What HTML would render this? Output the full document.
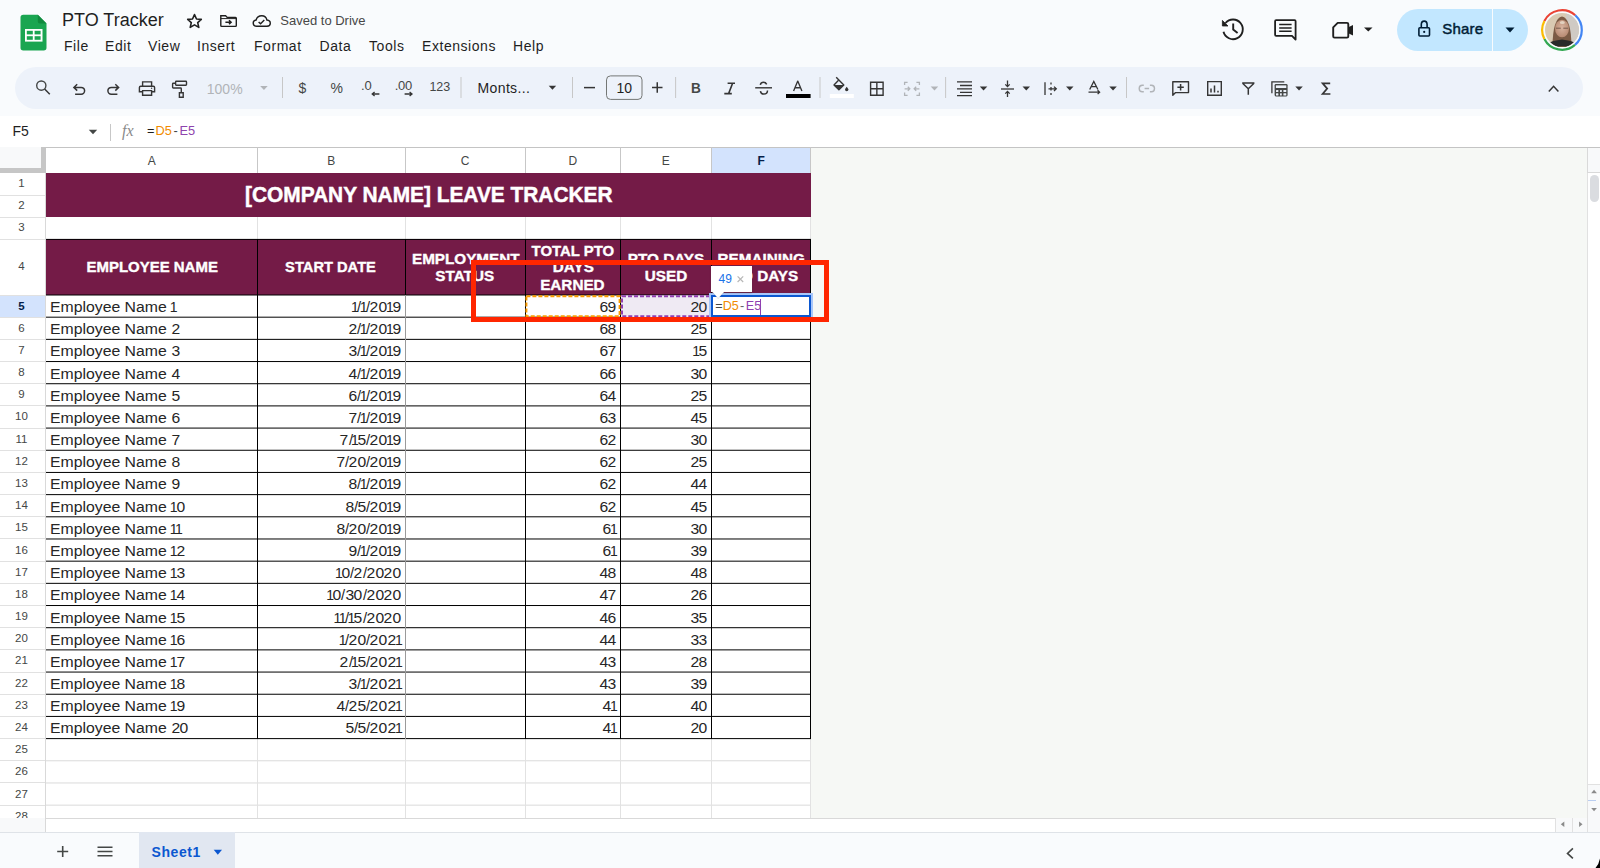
<!DOCTYPE html><html><head><meta charset='utf-8'><title>PTO Tracker</title><style>
*{box-sizing:border-box;margin:0;padding:0}
html,body{width:1600px;height:868px;overflow:hidden;background:#f9fbfd;font-family:"Liberation Sans",sans-serif;color:#1f1f1f}
.abs{position:absolute}
.t{position:absolute;white-space:nowrap;line-height:1}
.ic{position:absolute;overflow:visible}
.hl{position:absolute;height:1px}
.vl{position:absolute;width:1px}
.g{display:inline-flex;justify-content:center;overflow:visible}
</style></head><body>
<svg class='ic' style='left:20px;top:14px' width='28' height='37' viewBox='0 0 28 37'>
<path d='M2.5 0.8 H17.8 L26.5 9.5 V33.8 Q26.5 36.5 23.8 36.5 H3.2 Q0.5 36.5 0.5 33.8 V3.5 Q0.5 0.8 3.2 0.8Z' fill='#1aa551'/>
<path d='M17.8 0.8 L26.5 9.5 H20 Q17.8 9.5 17.8 7.3Z' fill='#108a3e'/>
<rect x='5' y='15' width='17.5' height='12.6' fill='#fff'/>
<rect x='6.8' y='16.8' width='6' height='3.6' fill='#1aa551'/><rect x='14.6' y='16.8' width='6' height='3.6' fill='#1aa551'/>
<rect x='6.8' y='22.2' width='6' height='3.6' fill='#1aa551'/><rect x='14.6' y='22.2' width='6' height='3.6' fill='#1aa551'/>
</svg>
<div class='t' style='left:62px;top:11px;font-size:18px;color:#1f1f1f'>PTO Tracker</div>
<svg class='ic' style='left:185px;top:12px' width='19' height='18' viewBox='0 0 19 18'><path d='M9.5 2.6 L11.5 7 L16.3 7.4 L12.7 10.6 L13.8 15.4 L9.5 12.9 L5.2 15.4 L6.3 10.6 L2.7 7.4 L7.5 7Z' fill='none' stroke='#1f1f1f' stroke-width='1.6' stroke-linejoin='round'/></svg>
<svg class='ic' style='left:0;top:0' width='400' height='40' viewBox='0 0 400 40'><path d='M220.8 15.8 H225.6 L227.2 17.4 H235.5 Q236.3 17.4 236.3 18.2 V25.6 Q236.3 26.4 235.5 26.4 H221.6 Q220.8 26.4 220.8 25.6Z' fill='none' stroke='#1f1f1f' stroke-width='1.4'/><path d='M220.8 18.6 H236.3' stroke='#1f1f1f' stroke-width='1'/><path d='M225.4 22.2 H231 M229 20.3 L231.1 22.2 L229 24.1' fill='none' stroke='#1f1f1f' stroke-width='1.5'/></svg>
<svg class='ic' style='left:0;top:0' width='400' height='40' viewBox='0 0 400 40'><path d='M256.6 26.2 Q253.2 26.2 253.2 23.1 Q253.2 20.4 256.1 20 Q257.2 15.7 261.8 15.7 Q266 15.7 266.9 20 Q270.3 20.3 270.3 23.2 Q270.3 26.2 267 26.2Z' fill='none' stroke='#1f1f1f' stroke-width='1.4'/><path d='M258.6 21.9 L260.6 23.8 L264.3 20.1' fill='none' stroke='#1f1f1f' stroke-width='1.4'/></svg>
<div class='t' style='left:280.3px;top:14px;font-size:13px;color:#474747'>Saved to Drive</div>
<div class='t' style='left:64px;top:39px;font-size:14px;color:#1f1f1f;letter-spacing:0.55px'>File</div>
<div class='t' style='left:105px;top:39px;font-size:14px;color:#1f1f1f;letter-spacing:0.55px'>Edit</div>
<div class='t' style='left:148px;top:39px;font-size:14px;color:#1f1f1f;letter-spacing:0.55px'>View</div>
<div class='t' style='left:197px;top:39px;font-size:14px;color:#1f1f1f;letter-spacing:0.55px'>Insert</div>
<div class='t' style='left:254px;top:39px;font-size:14px;color:#1f1f1f;letter-spacing:0.55px'>Format</div>
<div class='t' style='left:319.5px;top:39px;font-size:14px;color:#1f1f1f;letter-spacing:0.55px'>Data</div>
<div class='t' style='left:369px;top:39px;font-size:14px;color:#1f1f1f;letter-spacing:0.55px'>Tools</div>
<div class='t' style='left:422px;top:39px;font-size:14px;color:#1f1f1f;letter-spacing:0.55px'>Extensions</div>
<div class='t' style='left:513px;top:39px;font-size:14px;color:#1f1f1f;letter-spacing:0.55px'>Help</div>
<svg class='ic' style='left:0;top:0' width='1600' height='60' viewBox='0 0 1600 60'>
<path d='M1223.5 31.8 A9.8 9.8 0 1 0 1225.5 23' fill='none' stroke='#1f1f1f' stroke-width='1.9'/>
<path d='M1222.4 20.4 L1222.4 26 L1228 26Z' fill='#1f1f1f' stroke='#1f1f1f' stroke-width='0.8' stroke-linejoin='round'/>
<path d='M1233.2 23.6 V29.6 L1237.6 33.1' fill='none' stroke='#1f1f1f' stroke-width='1.9'/>
<path d='M1276.1 20.2 H1294.6 Q1295.6 20.2 1295.6 21.2 V39.6 L1292 35.8 H1276.1 Q1275.1 35.8 1275.1 34.8 V21.2 Q1275.1 20.2 1276.1 20.2Z' fill='none' stroke='#1f1f1f' stroke-width='1.8' stroke-linejoin='round'/>
<path d='M1279.2 24.6 H1291.6 M1279.2 28 H1291.6 M1279.2 31.3 H1291.6' stroke='#1f1f1f' stroke-width='1.5'/>
<path d='M1337.7 22.9 H1347 Q1348.3 22.9 1348.3 24.2 V36.3 Q1348.3 37.6 1347 37.6 H1334.5 Q1333.2 37.6 1333.2 36.3 V27.4Z' fill='none' stroke='#1f1f1f' stroke-width='1.9' stroke-linejoin='round'/>
<path d='M1348.3 27.2 L1353 24.9 V35.5 L1348.3 33.2Z' fill='#1f1f1f'/>
<path d='M1364 27.4 H1372.5 L1368.25 31.6Z' fill='#1f1f1f'/>
</svg>
<div class='abs' style='left:1397px;top:9px;width:131px;height:41.5px;border-radius:21px;background:#c2e7ff'></div>
<div class='abs' style='left:1492px;top:9px;width:1px;height:41.5px;background:#f9fbfd'></div>
<svg class='ic' style='left:0;top:0' width='1600' height='60' viewBox='0 0 1600 60'><rect x='1418.9' y='27.8' width='10.6' height='8.2' rx='0.9' fill='none' stroke='#001d35' stroke-width='1.6'/><path d='M1421.3 27.8 V24.6 Q1421.3 21.1 1424.2 21.1 Q1427.1 21.1 1427.1 24.6 V27.8' fill='none' stroke='#001d35' stroke-width='1.6'/><circle cx='1424.2' cy='31.9' r='1.1' fill='#001d35'/></svg>
<div class='t' style='left:1442.3px;top:20.9px;font-size:15px;color:#001d35;-webkit-text-stroke:0.45px #001d35;letter-spacing:0.2px'>Share</div>
<svg class='ic' style='left:1504px;top:26px' width='12' height='8' viewBox='0 0 12 8'><path d='M1.5 1.5 H10.5 L6 6.5Z' fill='#001d35'/></svg>
<svg class='ic' style='left:1540px;top:7.8px' width='44' height='44' viewBox='0 0 44 44'>
<defs><clipPath id='avc'><circle cx='22' cy='22' r='17'/></clipPath>
<radialGradient id='face' cx='0.5' cy='0.45' r='0.55'><stop offset='0' stop-color='#d8b4a0'/><stop offset='1' stop-color='#b88a72'/></radialGradient></defs>
<path d='M4.36 13.01 A19.8 19.8 0 0 1 35.25 7.29' fill='none' stroke='#ea4335' stroke-width='2.2'/><path d='M35.25 7.29 A19.8 19.8 0 0 1 34.99 36.94' fill='none' stroke='#4285f4' stroke-width='2.2'/><path d='M34.99 36.94 A19.8 19.8 0 0 1 4.36 30.99' fill='none' stroke='#34a853' stroke-width='2.2'/><path d='M4.36 30.99 A19.8 19.8 0 0 1 4.36 13.01' fill='none' stroke='#fbbc04' stroke-width='2.2'/>
<g clip-path='url(#avc)'>
<rect x='0' y='0' width='44' height='44' fill='#d9c9b2'/>
<rect x='26' y='0' width='18' height='44' fill='#cfcac4'/>
<path d='M12.5 44 Q12 10 22 8.5 Q32 10 31.5 44Z' fill='#7b5a44'/>
<ellipse cx='22' cy='20.5' rx='7' ry='8.8' fill='url(#face)'/>
<ellipse cx='22.3' cy='14.5' rx='2.5' ry='1.5' fill='#e3d2c0'/>
<path d='M4 44 Q6 33.5 16 32.5 L22 31.5 L28 32.5 Q38 33.5 40 44Z' fill='#2a2a2a'/>
<path d='M18 38 Q20 44 22 44 Q24 44 26 38' fill='#7b5a44' opacity='0.8'/>
<path d='M15.8 20.2 H20.8 M23.3 20.2 H28.3' stroke='#6e5446' stroke-width='0.9'/>
</g></svg>
<div class='abs' style='left:15px;top:66.5px;width:1568px;height:42px;border-radius:21px;background:#edf2fa'></div>
<div class='abs' style='left:0;top:116px;width:1600px;height:31px;background:#fff'></div>
<div class='t' style='left:12.5px;top:123.5px;font-size:14px;color:#1f1f1f'>F5</div>
<svg class='ic' style='left:88px;top:129px' width='10' height='6' viewBox='0 0 10 6'><path d='M0.8 0.8 H9.2 L5 5.2Z' fill='#444746'/></svg>
<div class='abs' style='left:110px;top:124px;width:1px;height:17px;background:#c7c7c7'></div>
<div class='t' style='left:122px;top:123px;font-size:16px;font-family:"Liberation Serif",serif;font-style:italic;color:#8a8a8a'>fx</div>
<div class='t' style='left:147px;top:125.3px;font-size:12.8px;color:#1f1f1f'>=<span style='color:#f28b00;margin-left:1px'>D5</span><span style='margin:0 1.8px 0 1.6px;color:#444'>-</span><span style='color:#8e44ad'>E5</span></div>
<svg class='abs' style='left:0;top:0;pointer-events:none' width='1600' height='868' viewBox='0 0 1600 868'><circle cx='41.3' cy='85.6' r='4.6' fill='none' stroke='#444746' stroke-width='1.4'/><path d='M44.6 89 L49.8 94.2' fill='none' stroke='#353535' stroke-width='1.5' /><path d='M77.2 84.3 L73.9 87.4 L77.2 90.6 M74 87.4 H81.2 A3.4 3.4 0 0 1 81.2 94.2 H75.1' fill='none' stroke='#353535' stroke-width='1.5' /><path d='M115.3 84.3 L118.6 87.4 L115.3 90.6 M118.5 87.4 H111.3 A3.4 3.4 0 0 0 111.3 94.2 H117.4' fill='none' stroke='#353535' stroke-width='1.5' /><path d='M142.6 86.2 V81.9 H151.6 V86.2 M142.6 91.8 H139.4 V87.6 Q139.4 86.3 140.7 86.3 H153.3 Q154.6 86.3 154.6 87.6 V91.8 H151.6' fill='none' stroke='#353535' stroke-width='1.4' /><path d='M142.6 90.6 H151.6 V95.3 H142.6Z' fill='none' stroke='#353535' stroke-width='1.4' /><circle cx='151.6' cy='88.3' r='0.7' fill='#444746'/><path d='M176.3 81.3 H185.8 Q186.5 81.3 186.5 82 V84.6 Q186.5 85.3 185.8 85.3 H176.3 Q175.6 85.3 175.6 84.6 V82 Q175.6 81.3 176.3 81.3Z' fill='none' stroke='#353535' stroke-width='1.4' /><path d='M175.6 83.2 H173.3 Q172.6 83.2 172.6 83.9 V87.3 Q172.6 88 173.3 88 H180.6 Q181.3 88 181.3 88.7 V92.6' fill='none' stroke='#353535' stroke-width='1.4' /><path d='M179.4 92.7 H183.2 V97.2 H179.4Z' fill='none' stroke='#353535' stroke-width='1.4' /><path d='M260.2 85.9 h7.5 l-3.75 4z' fill='#b1b4b8'/><rect x='282.0' y='77' width='1' height='21' fill='#c7c7c7'/><path d='M379.4 94 H372.5 M374.6 92 L372.2 94 L374.6 96' fill='none' stroke='#353535' stroke-width='1.3' /><path d='M404.6 94 H411.8 M409.6 92 L412 94 L409.6 96' fill='none' stroke='#353535' stroke-width='1.3' /><rect x='460.5' y='77' width='1' height='21' fill='#c7c7c7'/><path d='M548.7 85.8 h7.5 l-3.75 4z' fill='#353535'/><rect x='572.0' y='77' width='1' height='21' fill='#c7c7c7'/><path d='M584 87.6 H595' fill='none' stroke='#353535' stroke-width='1.5' /><rect x='606.5' y='75.9' width='35.5' height='23.5' rx='4' fill='none' stroke='#747775' stroke-width='1'/><path d='M652 87.6 H662.5 M657.25 82.3 V92.8' fill='none' stroke='#353535' stroke-width='1.5' /><rect x='675.1' y='77' width='1' height='21' fill='#c7c7c7'/><path d='M727.6 83.3 H735 M724.3 93.6 H731.8 M732.6 83.3 L728.6 93.6' fill='none' stroke='#353535' stroke-width='1.6' /><path d='M755.2 87.8 H772' fill='none' stroke='#353535' stroke-width='1.4' /><path d='M760.3 84.9 Q760.9 82.3 763.5 82.3 Q765.7 82.3 766.7 84.3' fill='none' stroke='#353535' stroke-width='1.5' /><path d='M760.4 91.1 Q760.9 94.1 763.8 94.1 Q767.4 94.1 767.5 90.5' fill='none' stroke='#353535' stroke-width='1.5' /><path d='M793.6 90.9 L797.75 81.1 L801.9 90.9 M794.9 87.7 H800.6' fill='none' stroke='#353535' stroke-width='1.35' stroke-linejoin='round'/><path d='M786 94 H810.6 V98 H786Z' fill='#000'/><path d='M829.8 94 H853.8 V98 H829.8Z' fill='#fff'/><rect x='819.5' y='77' width='1' height='21' fill='#c7c7c7'/><path d='M836.2 77.2 L843.8 84.9 L838.9 89.8 L834 84.9 L838.3 80.6' fill='none' stroke='#353535' stroke-width='1.4' stroke-linejoin='round'/><path d='M834 84.9 H843.8 L838.9 89.8Z' fill='#353535'/><path d='M846.7 86.8 Q848.4 88.8 848.4 89.6 A1.7 1.7 0 0 1 845 89.6 Q845 88.8 846.7 86.8Z' fill='#353535'/><path d='M870.6 82.3 H883.1 V95.3 H870.6Z M876.85 82.3 V95.3 M870.6 88.8 H883.1' fill='none' stroke='#353535' stroke-width='1.4' /><path d='M904.6 85 V82.3 H907.6 M904.6 92.5 V95.3 H907.6 M919.4 85 V82.3 H916.4 M919.4 92.5 V95.3 H916.4' fill='none' stroke='#b1b4b8' stroke-width='1.3' /><path d='M904.6 88.8 H909.8 M907.8 86.8 L909.8 88.8 L907.8 90.8 M919.4 88.8 H914.2 M916.2 86.8 L914.2 88.8 L916.2 90.8' fill='none' stroke='#b1b4b8' stroke-width='1.3' /><path d='M930.7 86.6 h7.5 l-3.75 4z' fill='#b1b4b8'/><rect x='945.1' y='77' width='1' height='21' fill='#c7c7c7'/><path d='M957 81.9 H972 M960 85.5 H972 M957 88.9 H972 M960 92.3 H972 M957 95.6 H972' fill='none' stroke='#353535' stroke-width='1.3' /><path d='M979.8 86.6 h7.5 l-3.75 4z' fill='#353535'/><path d='M1001 89 H1014' fill='none' stroke='#353535' stroke-width='1.3' /><path d='M1007.5 80.4 V86.4 M1005.3 84.4 L1007.5 86.6 L1009.7 84.4 M1007.5 97 V91.6 M1005.3 93.6 L1007.5 91.4 L1009.7 93.6' fill='none' stroke='#353535' stroke-width='1.3' /><path d='M1022.5 86.6 h7.5 l-3.75 4z' fill='#353535'/><path d='M1045 82.2 V95 M1051 82.5 V84.5 M1051 87 V90.5 M1051 93 V95 M1048.5 88.8 H1056.2 M1054 86.6 L1056.3 88.8 L1054 91' fill='none' stroke='#353535' stroke-width='1.3' /><path d='M1066 86.6 h7.5 l-3.75 4z' fill='#353535'/><path d='M1088.5 92.2 H1099.5 M1097.6 90.3 L1099.6 92.2 L1097.6 94.1' fill='none' stroke='#353535' stroke-width='1.3' /><path d='M1089.7 89.5 L1093.8 81.4 L1097.9 89.5 M1091.2 86.6 H1096.4' fill='none' stroke='#353535' stroke-width='1.3' /><path d='M1109.3 86.6 h7.5 l-3.75 4z' fill='#353535'/><rect x='1126.0' y='77' width='1' height='21' fill='#c7c7c7'/><path d='M1143.8 85.3 H1142.3 Q1139.2 85.3 1139.2 88.5 Q1139.2 91.7 1142.3 91.7 H1143.8 M1149.9 85.3 H1151.4 Q1154.5 85.3 1154.5 88.5 Q1154.5 91.7 1151.4 91.7 H1149.9 M1144.6 88.5 H1149.1' fill='none' stroke='#b1b4b8' stroke-width='1.4' /><path d='M1172.8 95.3 V81.8 H1188.5 V92.6 H1175.6Z' fill='none' stroke='#353535' stroke-width='1.4' stroke-linejoin='round'/><path d='M1180.6 83.9 V90.4 M1177.4 87.2 H1183.8' fill='none' stroke='#353535' stroke-width='1.5' /><path d='M1207.7 81.6 H1221.3 V95.3 H1207.7Z' fill='none' stroke='#353535' stroke-width='1.4' /><path d='M1211 88.6 V92.6 M1214.5 85.4 V92.6 M1218 90.8 V92.6' fill='none' stroke='#353535' stroke-width='1.5' /><path d='M1242.2 82.9 H1254.4 M1242.6 83.2 L1248.3 88.8 L1254 83.2 M1248.3 88.6 V94.8' fill='none' stroke='#353535' stroke-width='1.5' /><path d='M1271.9 93.3 V81.9 H1284.3' fill='none' stroke='#353535' stroke-width='1.3' /><rect x='1274.6' y='84' width='13' height='12.4' rx='1.3' fill='#444746'/><rect x='1275.9' y='85.4' width='10.4' height='2.6' fill='#edf2fa'/><rect x='1276' y='89.9' width='2.4' height='2.0' rx='0.5' fill='#edf2fa'/><rect x='1276' y='93.25' width='2.4' height='2.2' rx='0.5' fill='#edf2fa'/><rect x='1280' y='89.9' width='1.8' height='2.0' rx='0.5' fill='#edf2fa'/><rect x='1280' y='93.25' width='1.8' height='2.2' rx='0.5' fill='#edf2fa'/><rect x='1283.4' y='89.9' width='2.9' height='2.0' rx='0.5' fill='#edf2fa'/><rect x='1283.4' y='93.25' width='2.9' height='2.2' rx='0.5' fill='#edf2fa'/><path d='M1295.3 86.6 h7.5 l-3.75 4z' fill='#353535'/><path d='M1330.2 83.3 H1322.6 L1327.2 88.6 L1322.6 94 H1330.4' fill='none' stroke='#353535' stroke-width='1.7' stroke-linejoin='miter'/><path d='M1548.8 91.5 L1553.6 86.3 L1558.4 91.5' fill='none' stroke='#353535' stroke-width='1.5' /></svg>
<div class='t' style='left:206.8px;top:81.5px;font-size:14px;color:#b1b4b8'>100%</div>
<div class='t' style='left:298.6px;top:80.8px;font-size:14px;color:#444746'>$</div>
<div class='t' style='left:330.6px;top:80.8px;font-size:14px;color:#444746'>%</div>
<div class='t' style='left:361px;top:79px;font-size:13px;color:#444746'>.0</div>
<div class='t' style='left:394.7px;top:79px;font-size:13px;color:#444746;letter-spacing:-0.3px'>.00</div>
<div class='t' style='left:429.4px;top:81px;font-size:12.5px;color:#444746'>123</div>
<div class='t' style='left:477.6px;top:80.5px;font-size:14px;color:#1f1f1f;letter-spacing:0.35px'>Monts...</div>
<div class='t' style='left:616.5px;top:80.8px;font-size:14px;color:#1f1f1f'>10</div>
<div class='t' style='left:690.9px;top:80.2px;font-size:15.5px;font-weight:700;color:#444746;transform:scaleX(0.88);transform-origin:0 0'>B</div>
<div class='abs' style='left:0;top:147px;width:1588px;height:671px;background:#f6f8f5'></div>
<div class='abs' style='left:46px;top:147px;width:765px;height:671px;background:#fff'></div>
<div class='abs' style='left:0;top:146.6px;width:1600px;height:1px;background:#c4c4c4'></div>
<div class='abs' style='left:0;top:147px;width:41.5px;height:21.3px;background:#f8f9fa'></div>
<div class='abs' style='left:41.2px;top:147px;width:4.8px;height:25.8px;background:#c6c6c6'></div>
<div class='abs' style='left:0;top:168.3px;width:46px;height:4.5px;background:#c6c6c6'></div>
<div class='abs' style='left:711.5px;top:147.5px;width:99.5px;height:25px;background:#d3e3fd'></div>
<div class='abs' style='left:0;top:172.8px;width:45.5px;height:645px;background:#fff'></div>
<div class='abs' style='left:0;top:295.5px;width:45.5px;height:22px;background:#d3e3fd'></div>
<div class='t' style='left:131.75px;width:40px;text-align:center;top:154.5px;font-size:12px;color:#444746'>A</div>
<div class='t' style='left:311.25px;width:40px;text-align:center;top:154.5px;font-size:12px;color:#444746'>B</div>
<div class='t' style='left:445.2px;width:40px;text-align:center;top:154.5px;font-size:12px;color:#444746'>C</div>
<div class='t' style='left:552.9px;width:40px;text-align:center;top:154.5px;font-size:12px;color:#444746'>D</div>
<div class='t' style='left:645.825px;width:40px;text-align:center;top:154.5px;font-size:12px;color:#444746'>E</div>
<div class='t' style='left:741.075px;width:40px;text-align:center;top:154.5px;font-size:12px;font-weight:700;color:#041e49'>F</div>
<div class='t' style='left:-1px;width:45px;text-align:center;top:177.60px;font-size:11.5px;color:#444746'>1</div>
<div class='t' style='left:-1px;width:45px;text-align:center;top:199.80px;font-size:11.5px;color:#444746'>2</div>
<div class='t' style='left:-1px;width:45px;text-align:center;top:222.00px;font-size:11.5px;color:#444746'>3</div>
<div class='t' style='left:-1px;width:45px;text-align:center;top:260.90px;font-size:11.5px;color:#444746'>4</div>
<div class='t' style='left:-1px;width:45px;text-align:center;top:300.59px;font-size:11.5px;font-weight:700;color:#041e49'>5</div>
<div class='t' style='left:-1px;width:45px;text-align:center;top:322.77px;font-size:11.5px;color:#444746'>6</div>
<div class='t' style='left:-1px;width:45px;text-align:center;top:344.95px;font-size:11.5px;color:#444746'>7</div>
<div class='t' style='left:-1px;width:45px;text-align:center;top:367.13px;font-size:11.5px;color:#444746'>8</div>
<div class='t' style='left:-1px;width:45px;text-align:center;top:389.31px;font-size:11.5px;color:#444746'>9</div>
<div class='t' style='left:-1px;width:45px;text-align:center;top:411.49px;font-size:11.5px;color:#444746'>10</div>
<div class='t' style='left:-1px;width:45px;text-align:center;top:433.67px;font-size:11.5px;color:#444746'>11</div>
<div class='t' style='left:-1px;width:45px;text-align:center;top:455.85px;font-size:11.5px;color:#444746'>12</div>
<div class='t' style='left:-1px;width:45px;text-align:center;top:478.03px;font-size:11.5px;color:#444746'>13</div>
<div class='t' style='left:-1px;width:45px;text-align:center;top:500.21px;font-size:11.5px;color:#444746'>14</div>
<div class='t' style='left:-1px;width:45px;text-align:center;top:522.39px;font-size:11.5px;color:#444746'>15</div>
<div class='t' style='left:-1px;width:45px;text-align:center;top:544.57px;font-size:11.5px;color:#444746'>16</div>
<div class='t' style='left:-1px;width:45px;text-align:center;top:566.75px;font-size:11.5px;color:#444746'>17</div>
<div class='t' style='left:-1px;width:45px;text-align:center;top:588.93px;font-size:11.5px;color:#444746'>18</div>
<div class='t' style='left:-1px;width:45px;text-align:center;top:611.11px;font-size:11.5px;color:#444746'>19</div>
<div class='t' style='left:-1px;width:45px;text-align:center;top:633.29px;font-size:11.5px;color:#444746'>20</div>
<div class='t' style='left:-1px;width:45px;text-align:center;top:655.47px;font-size:11.5px;color:#444746'>21</div>
<div class='t' style='left:-1px;width:45px;text-align:center;top:677.65px;font-size:11.5px;color:#444746'>22</div>
<div class='t' style='left:-1px;width:45px;text-align:center;top:699.83px;font-size:11.5px;color:#444746'>23</div>
<div class='t' style='left:-1px;width:45px;text-align:center;top:722.01px;font-size:11.5px;color:#444746'>24</div>
<div class='t' style='left:-1px;width:45px;text-align:center;top:744.19px;font-size:11.5px;color:#444746'>25</div>
<div class='t' style='left:-1px;width:45px;text-align:center;top:766.37px;font-size:11.5px;color:#444746'>26</div>
<div class='t' style='left:-1px;width:45px;text-align:center;top:788.55px;font-size:11.5px;color:#444746'>27</div>
<div class='t' style='left:-1px;width:45px;text-align:center;top:810.73px;font-size:11.5px;color:#444746'>28</div>
<div class='hl' style='left:0;top:194.50px;width:46px;background:#e1e1e1'></div>
<div class='hl' style='left:0;top:216.70px;width:46px;background:#e1e1e1'></div>
<div class='hl' style='left:0;top:238.90px;width:46px;background:#e1e1e1'></div>
<div class='hl' style='left:0;top:294.50px;width:46px;background:#e1e1e1'></div>
<div class='hl' style='left:0;top:316.68px;width:46px;background:#e1e1e1'></div>
<div class='hl' style='left:0;top:338.86px;width:46px;background:#e1e1e1'></div>
<div class='hl' style='left:0;top:361.04px;width:46px;background:#e1e1e1'></div>
<div class='hl' style='left:0;top:383.22px;width:46px;background:#e1e1e1'></div>
<div class='hl' style='left:0;top:405.40px;width:46px;background:#e1e1e1'></div>
<div class='hl' style='left:0;top:427.58px;width:46px;background:#e1e1e1'></div>
<div class='hl' style='left:0;top:449.76px;width:46px;background:#e1e1e1'></div>
<div class='hl' style='left:0;top:471.94px;width:46px;background:#e1e1e1'></div>
<div class='hl' style='left:0;top:494.12px;width:46px;background:#e1e1e1'></div>
<div class='hl' style='left:0;top:516.30px;width:46px;background:#e1e1e1'></div>
<div class='hl' style='left:0;top:538.48px;width:46px;background:#e1e1e1'></div>
<div class='hl' style='left:0;top:560.66px;width:46px;background:#e1e1e1'></div>
<div class='hl' style='left:0;top:582.84px;width:46px;background:#e1e1e1'></div>
<div class='hl' style='left:0;top:605.02px;width:46px;background:#e1e1e1'></div>
<div class='hl' style='left:0;top:627.20px;width:46px;background:#e1e1e1'></div>
<div class='hl' style='left:0;top:649.38px;width:46px;background:#e1e1e1'></div>
<div class='hl' style='left:0;top:671.56px;width:46px;background:#e1e1e1'></div>
<div class='hl' style='left:0;top:693.74px;width:46px;background:#e1e1e1'></div>
<div class='hl' style='left:0;top:715.92px;width:46px;background:#e1e1e1'></div>
<div class='hl' style='left:0;top:738.10px;width:46px;background:#e1e1e1'></div>
<div class='hl' style='left:0;top:760.28px;width:46px;background:#e1e1e1'></div>
<div class='hl' style='left:0;top:782.46px;width:46px;background:#e1e1e1'></div>
<div class='hl' style='left:0;top:804.64px;width:46px;background:#e1e1e1'></div>
<div class='vl' style='left:45.3px;top:172.8px;height:645px;background:#d9d9d9'></div>
<div class='vl' style='left:257.00px;top:147px;height:25.8px;background:#c7c7c7'></div>
<div class='vl' style='left:404.50px;top:147px;height:25.8px;background:#c7c7c7'></div>
<div class='vl' style='left:524.90px;top:147px;height:25.8px;background:#c7c7c7'></div>
<div class='vl' style='left:619.90px;top:147px;height:25.8px;background:#c7c7c7'></div>
<div class='vl' style='left:710.75px;top:147px;height:25.8px;background:#c7c7c7'></div>
<div class='vl' style='left:810.40px;top:147px;height:25.8px;background:#c7c7c7'></div>
<svg class='abs' style='left:0;top:0' width='1600' height='868' viewBox='0 0 1600 868'><rect x='46' y='760.28' width='765' height='1' fill='#dadada'/></svg>
<svg class='abs' style='left:0;top:0' width='1600' height='868' viewBox='0 0 1600 868'><rect x='46' y='782.46' width='765' height='1' fill='#dadada'/></svg>
<svg class='abs' style='left:0;top:0' width='1600' height='868' viewBox='0 0 1600 868'><rect x='46' y='804.64' width='765' height='1' fill='#dadada'/></svg>
<div class='vl' style='left:257.00px;top:738.6px;height:80px;background:#e2e2e2'></div>
<div class='vl' style='left:257.00px;top:217px;height:22.4px;background:#e2e2e2'></div>
<div class='vl' style='left:404.50px;top:738.6px;height:80px;background:#e2e2e2'></div>
<div class='vl' style='left:404.50px;top:217px;height:22.4px;background:#e2e2e2'></div>
<div class='vl' style='left:524.90px;top:738.6px;height:80px;background:#e2e2e2'></div>
<div class='vl' style='left:524.90px;top:217px;height:22.4px;background:#e2e2e2'></div>
<div class='vl' style='left:619.90px;top:738.6px;height:80px;background:#e2e2e2'></div>
<div class='vl' style='left:619.90px;top:217px;height:22.4px;background:#e2e2e2'></div>
<div class='vl' style='left:710.75px;top:738.6px;height:80px;background:#e2e2e2'></div>
<div class='vl' style='left:710.75px;top:217px;height:22.4px;background:#e2e2e2'></div>
<div class='vl' style='left:810.40px;top:738.6px;height:80px;background:#e2e2e2'></div>
<div class='vl' style='left:810.40px;top:217px;height:22.4px;background:#e2e2e2'></div>
<div class='abs' style='left:46px;top:172.8px;width:765px;height:44.4px;background:#741b47'></div>
<div class='t' style='left:245px;top:184px;font-size:21.2px;font-weight:700;color:#fff;-webkit-text-stroke:0.45px #fff;transform:scaleX(0.985);transform-origin:0 0'>[COMPANY NAME] LEAVE TRACKER</div>
<div class='abs' style='left:46px;top:239.4px;width:765px;height:55.6px;background:#741b47'></div>
<svg class='abs' style='left:0;top:0' width='1600' height='868' viewBox='0 0 1600 868'><rect x='46' y='238.90' width='765' height='1' fill='#000'/><rect x='46' y='294.50' width='765' height='1' fill='#000'/><rect x='46' y='316.68' width='765' height='1' fill='#000'/><rect x='46' y='338.86' width='765' height='1' fill='#000'/><rect x='46' y='361.04' width='765' height='1' fill='#000'/><rect x='46' y='383.22' width='765' height='1' fill='#000'/><rect x='46' y='405.40' width='765' height='1' fill='#000'/><rect x='46' y='427.58' width='765' height='1' fill='#000'/><rect x='46' y='449.76' width='765' height='1' fill='#000'/><rect x='46' y='471.94' width='765' height='1' fill='#000'/><rect x='46' y='494.12' width='765' height='1' fill='#000'/><rect x='46' y='516.30' width='765' height='1' fill='#000'/><rect x='46' y='538.48' width='765' height='1' fill='#000'/><rect x='46' y='560.66' width='765' height='1' fill='#000'/><rect x='46' y='582.84' width='765' height='1' fill='#000'/><rect x='46' y='605.02' width='765' height='1' fill='#000'/><rect x='46' y='627.20' width='765' height='1' fill='#000'/><rect x='46' y='649.38' width='765' height='1' fill='#000'/><rect x='46' y='671.56' width='765' height='1' fill='#000'/><rect x='46' y='693.74' width='765' height='1' fill='#000'/><rect x='46' y='715.92' width='765' height='1' fill='#000'/><rect x='46' y='738.10' width='765' height='1' fill='#000'/></svg>
<div class='vl' style='left:257.00px;top:239.4px;height:499.4px;background:#000'></div>
<div class='vl' style='left:404.50px;top:239.4px;height:499.4px;background:#9a9a9a'></div>
<div class='vl' style='left:524.90px;top:239.4px;height:499.4px;background:#000'></div>
<div class='vl' style='left:619.90px;top:239.4px;height:499.4px;background:#000'></div>
<div class='vl' style='left:710.75px;top:239.4px;height:499.4px;background:#000'></div>
<div class='vl' style='left:810.40px;top:239.4px;height:499.4px;background:#000'></div>
<div class='vl' style='left:404.50px;top:239.4px;height:55.6px;background:#000'></div>
<div class='t' style='left:51.70px;width:200px;text-align:center;top:260.13px;font-size:14.4px;font-weight:700;color:#fff;-webkit-text-stroke:0.35px #fff'><span style='display:inline-block;transform:scaleX(1.04)'>EMPLOYEE NAME</span></div>
<div class='t' style='left:230.85px;width:200px;text-align:center;top:260.13px;font-size:14.4px;font-weight:700;color:#fff;-webkit-text-stroke:0.35px #fff'><span style='display:inline-block;transform:scaleX(1.02)'>START DATE</span></div>
<div class='t' style='left:365.50px;width:200px;text-align:center;top:252.13px;font-size:14.4px;font-weight:700;color:#fff;-webkit-text-stroke:0.35px #fff'><span style='display:inline-block;transform:scaleX(1.06)'>EMPLOYMENT</span></div>
<div class='t' style='left:365.00px;width:200px;text-align:center;top:268.83px;font-size:14.4px;font-weight:700;color:#fff;-webkit-text-stroke:0.35px #fff'><span style='display:inline-block;transform:scaleX(1.06)'>STATUS</span></div>
<div class='t' style='left:472.95px;width:200px;text-align:center;top:243.83px;font-size:14.4px;font-weight:700;color:#fff;-webkit-text-stroke:0.35px #fff'><span style='display:inline-block;transform:scaleX(1.035)'>TOTAL PTO</span></div>
<div class='t' style='left:473.00px;width:200px;text-align:center;top:260.13px;font-size:14.4px;font-weight:700;color:#fff;-webkit-text-stroke:0.35px #fff'><span style='display:inline-block;transform:scaleX(1.06)'>DAYS</span></div>
<div class='t' style='left:472.85px;width:200px;text-align:center;top:277.53px;font-size:14.4px;font-weight:700;color:#fff;-webkit-text-stroke:0.35px #fff'><span style='display:inline-block;transform:scaleX(1.06)'>EARNED</span></div>
<div class='t' style='left:565.65px;width:200px;text-align:center;top:251.63px;font-size:14.4px;font-weight:700;color:#fff;-webkit-text-stroke:0.35px #fff'><span style='display:inline-block;transform:scaleX(1.06)'>PTO DAYS</span></div>
<div class='t' style='left:566.05px;width:200px;text-align:center;top:268.83px;font-size:14.4px;font-weight:700;color:#fff;-webkit-text-stroke:0.35px #fff'><span style='display:inline-block;transform:scaleX(1.06)'>USED</span></div>
<div class='t' style='left:661.00px;width:200px;text-align:center;top:251.63px;font-size:14.4px;font-weight:700;color:#fff;-webkit-text-stroke:0.35px #fff'><span style='display:inline-block;transform:scaleX(1.06)'>REMAINING</span></div>
<div class='t' style='left:660.00px;width:200px;text-align:center;top:268.83px;font-size:14.4px;font-weight:700;color:#fff;-webkit-text-stroke:0.35px #fff'><span style='display:inline-block;transform:scaleX(1.06)'>PTO DAYS</span></div>
<div class='t' style='left:49.9px;top:300.02px;font-size:14px;color:#262626'><span style='display:inline-block;transform:scaleX(1.128);transform-origin:0 0'>Employee Name</span></div>
<div class='t' style='left:171px;top:300.02px;font-size:14px;color:#262626;display:flex'><span class='g' style='width:5.25px'><span style='display:inline-block;transform:scaleX(1.0)'>1</span></span></div>
<div class='t' style='left:200px;width:201.4px;top:300.02px;font-size:14px;color:#262626;display:flex;justify-content:flex-end'><span class='g' style='width:5.25px'><span style='display:inline-block;transform:scaleX(1.0)'>1</span></span><span class='g' style='width:3.5px'><span style='display:inline-block;transform:scaleX(1.05)'>/</span></span><span class='g' style='width:5.25px'><span style='display:inline-block;transform:scaleX(1.0)'>1</span></span><span class='g' style='width:3.5px'><span style='display:inline-block;transform:scaleX(1.05)'>/</span></span><span class='g' style='width:8.8px'><span style='display:inline-block;transform:scaleX(1.12)'>2</span></span><span class='g' style='width:8.8px'><span style='display:inline-block;transform:scaleX(1.12)'>0</span></span><span class='g' style='width:5.25px'><span style='display:inline-block;transform:scaleX(1.0)'>1</span></span><span class='g' style='width:8.8px'><span style='display:inline-block;transform:scaleX(1.12)'>9</span></span></div>
<div class='t' style='left:49.9px;top:322.20px;font-size:14px;color:#262626'><span style='display:inline-block;transform:scaleX(1.128);transform-origin:0 0'>Employee Name</span></div>
<div class='t' style='left:171px;top:322.20px;font-size:14px;color:#262626;display:flex'><span class='g' style='width:8.8px'><span style='display:inline-block;transform:scaleX(1.12)'>2</span></span></div>
<div class='t' style='left:200px;width:201.4px;top:322.20px;font-size:14px;color:#262626;display:flex;justify-content:flex-end'><span class='g' style='width:8.8px'><span style='display:inline-block;transform:scaleX(1.12)'>2</span></span><span class='g' style='width:3.5px'><span style='display:inline-block;transform:scaleX(1.05)'>/</span></span><span class='g' style='width:5.25px'><span style='display:inline-block;transform:scaleX(1.0)'>1</span></span><span class='g' style='width:3.5px'><span style='display:inline-block;transform:scaleX(1.05)'>/</span></span><span class='g' style='width:8.8px'><span style='display:inline-block;transform:scaleX(1.12)'>2</span></span><span class='g' style='width:8.8px'><span style='display:inline-block;transform:scaleX(1.12)'>0</span></span><span class='g' style='width:5.25px'><span style='display:inline-block;transform:scaleX(1.0)'>1</span></span><span class='g' style='width:8.8px'><span style='display:inline-block;transform:scaleX(1.12)'>9</span></span></div>
<div class='t' style='left:516px;width:100.6px;top:322.20px;font-size:14px;color:#262626;display:flex;justify-content:flex-end'><span class='g' style='width:8.8px'><span style='display:inline-block;transform:scaleX(1.12)'>6</span></span><span class='g' style='width:8.8px'><span style='display:inline-block;transform:scaleX(1.12)'>8</span></span></div>
<div class='t' style='left:607px;width:100.6px;top:322.20px;font-size:14px;color:#262626;display:flex;justify-content:flex-end'><span class='g' style='width:8.8px'><span style='display:inline-block;transform:scaleX(1.12)'>2</span></span><span class='g' style='width:8.8px'><span style='display:inline-block;transform:scaleX(1.12)'>5</span></span></div>
<div class='t' style='left:49.9px;top:344.38px;font-size:14px;color:#262626'><span style='display:inline-block;transform:scaleX(1.128);transform-origin:0 0'>Employee Name</span></div>
<div class='t' style='left:171px;top:344.38px;font-size:14px;color:#262626;display:flex'><span class='g' style='width:8.8px'><span style='display:inline-block;transform:scaleX(1.12)'>3</span></span></div>
<div class='t' style='left:200px;width:201.4px;top:344.38px;font-size:14px;color:#262626;display:flex;justify-content:flex-end'><span class='g' style='width:8.8px'><span style='display:inline-block;transform:scaleX(1.12)'>3</span></span><span class='g' style='width:3.5px'><span style='display:inline-block;transform:scaleX(1.05)'>/</span></span><span class='g' style='width:5.25px'><span style='display:inline-block;transform:scaleX(1.0)'>1</span></span><span class='g' style='width:3.5px'><span style='display:inline-block;transform:scaleX(1.05)'>/</span></span><span class='g' style='width:8.8px'><span style='display:inline-block;transform:scaleX(1.12)'>2</span></span><span class='g' style='width:8.8px'><span style='display:inline-block;transform:scaleX(1.12)'>0</span></span><span class='g' style='width:5.25px'><span style='display:inline-block;transform:scaleX(1.0)'>1</span></span><span class='g' style='width:8.8px'><span style='display:inline-block;transform:scaleX(1.12)'>9</span></span></div>
<div class='t' style='left:516px;width:100.6px;top:344.38px;font-size:14px;color:#262626;display:flex;justify-content:flex-end'><span class='g' style='width:8.8px'><span style='display:inline-block;transform:scaleX(1.12)'>6</span></span><span class='g' style='width:8.8px'><span style='display:inline-block;transform:scaleX(1.12)'>7</span></span></div>
<div class='t' style='left:607px;width:100.6px;top:344.38px;font-size:14px;color:#262626;display:flex;justify-content:flex-end'><span class='g' style='width:5.25px'><span style='display:inline-block;transform:scaleX(1.0)'>1</span></span><span class='g' style='width:8.8px'><span style='display:inline-block;transform:scaleX(1.12)'>5</span></span></div>
<div class='t' style='left:49.9px;top:366.56px;font-size:14px;color:#262626'><span style='display:inline-block;transform:scaleX(1.128);transform-origin:0 0'>Employee Name</span></div>
<div class='t' style='left:171px;top:366.56px;font-size:14px;color:#262626;display:flex'><span class='g' style='width:8.8px'><span style='display:inline-block;transform:scaleX(1.12)'>4</span></span></div>
<div class='t' style='left:200px;width:201.4px;top:366.56px;font-size:14px;color:#262626;display:flex;justify-content:flex-end'><span class='g' style='width:8.8px'><span style='display:inline-block;transform:scaleX(1.12)'>4</span></span><span class='g' style='width:3.5px'><span style='display:inline-block;transform:scaleX(1.05)'>/</span></span><span class='g' style='width:5.25px'><span style='display:inline-block;transform:scaleX(1.0)'>1</span></span><span class='g' style='width:3.5px'><span style='display:inline-block;transform:scaleX(1.05)'>/</span></span><span class='g' style='width:8.8px'><span style='display:inline-block;transform:scaleX(1.12)'>2</span></span><span class='g' style='width:8.8px'><span style='display:inline-block;transform:scaleX(1.12)'>0</span></span><span class='g' style='width:5.25px'><span style='display:inline-block;transform:scaleX(1.0)'>1</span></span><span class='g' style='width:8.8px'><span style='display:inline-block;transform:scaleX(1.12)'>9</span></span></div>
<div class='t' style='left:516px;width:100.6px;top:366.56px;font-size:14px;color:#262626;display:flex;justify-content:flex-end'><span class='g' style='width:8.8px'><span style='display:inline-block;transform:scaleX(1.12)'>6</span></span><span class='g' style='width:8.8px'><span style='display:inline-block;transform:scaleX(1.12)'>6</span></span></div>
<div class='t' style='left:607px;width:100.6px;top:366.56px;font-size:14px;color:#262626;display:flex;justify-content:flex-end'><span class='g' style='width:8.8px'><span style='display:inline-block;transform:scaleX(1.12)'>3</span></span><span class='g' style='width:8.8px'><span style='display:inline-block;transform:scaleX(1.12)'>0</span></span></div>
<div class='t' style='left:49.9px;top:388.74px;font-size:14px;color:#262626'><span style='display:inline-block;transform:scaleX(1.128);transform-origin:0 0'>Employee Name</span></div>
<div class='t' style='left:171px;top:388.74px;font-size:14px;color:#262626;display:flex'><span class='g' style='width:8.8px'><span style='display:inline-block;transform:scaleX(1.12)'>5</span></span></div>
<div class='t' style='left:200px;width:201.4px;top:388.74px;font-size:14px;color:#262626;display:flex;justify-content:flex-end'><span class='g' style='width:8.8px'><span style='display:inline-block;transform:scaleX(1.12)'>6</span></span><span class='g' style='width:3.5px'><span style='display:inline-block;transform:scaleX(1.05)'>/</span></span><span class='g' style='width:5.25px'><span style='display:inline-block;transform:scaleX(1.0)'>1</span></span><span class='g' style='width:3.5px'><span style='display:inline-block;transform:scaleX(1.05)'>/</span></span><span class='g' style='width:8.8px'><span style='display:inline-block;transform:scaleX(1.12)'>2</span></span><span class='g' style='width:8.8px'><span style='display:inline-block;transform:scaleX(1.12)'>0</span></span><span class='g' style='width:5.25px'><span style='display:inline-block;transform:scaleX(1.0)'>1</span></span><span class='g' style='width:8.8px'><span style='display:inline-block;transform:scaleX(1.12)'>9</span></span></div>
<div class='t' style='left:516px;width:100.6px;top:388.74px;font-size:14px;color:#262626;display:flex;justify-content:flex-end'><span class='g' style='width:8.8px'><span style='display:inline-block;transform:scaleX(1.12)'>6</span></span><span class='g' style='width:8.8px'><span style='display:inline-block;transform:scaleX(1.12)'>4</span></span></div>
<div class='t' style='left:607px;width:100.6px;top:388.74px;font-size:14px;color:#262626;display:flex;justify-content:flex-end'><span class='g' style='width:8.8px'><span style='display:inline-block;transform:scaleX(1.12)'>2</span></span><span class='g' style='width:8.8px'><span style='display:inline-block;transform:scaleX(1.12)'>5</span></span></div>
<div class='t' style='left:49.9px;top:410.92px;font-size:14px;color:#262626'><span style='display:inline-block;transform:scaleX(1.128);transform-origin:0 0'>Employee Name</span></div>
<div class='t' style='left:171px;top:410.92px;font-size:14px;color:#262626;display:flex'><span class='g' style='width:8.8px'><span style='display:inline-block;transform:scaleX(1.12)'>6</span></span></div>
<div class='t' style='left:200px;width:201.4px;top:410.92px;font-size:14px;color:#262626;display:flex;justify-content:flex-end'><span class='g' style='width:8.8px'><span style='display:inline-block;transform:scaleX(1.12)'>7</span></span><span class='g' style='width:3.5px'><span style='display:inline-block;transform:scaleX(1.05)'>/</span></span><span class='g' style='width:5.25px'><span style='display:inline-block;transform:scaleX(1.0)'>1</span></span><span class='g' style='width:3.5px'><span style='display:inline-block;transform:scaleX(1.05)'>/</span></span><span class='g' style='width:8.8px'><span style='display:inline-block;transform:scaleX(1.12)'>2</span></span><span class='g' style='width:8.8px'><span style='display:inline-block;transform:scaleX(1.12)'>0</span></span><span class='g' style='width:5.25px'><span style='display:inline-block;transform:scaleX(1.0)'>1</span></span><span class='g' style='width:8.8px'><span style='display:inline-block;transform:scaleX(1.12)'>9</span></span></div>
<div class='t' style='left:516px;width:100.6px;top:410.92px;font-size:14px;color:#262626;display:flex;justify-content:flex-end'><span class='g' style='width:8.8px'><span style='display:inline-block;transform:scaleX(1.12)'>6</span></span><span class='g' style='width:8.8px'><span style='display:inline-block;transform:scaleX(1.12)'>3</span></span></div>
<div class='t' style='left:607px;width:100.6px;top:410.92px;font-size:14px;color:#262626;display:flex;justify-content:flex-end'><span class='g' style='width:8.8px'><span style='display:inline-block;transform:scaleX(1.12)'>4</span></span><span class='g' style='width:8.8px'><span style='display:inline-block;transform:scaleX(1.12)'>5</span></span></div>
<div class='t' style='left:49.9px;top:433.10px;font-size:14px;color:#262626'><span style='display:inline-block;transform:scaleX(1.128);transform-origin:0 0'>Employee Name</span></div>
<div class='t' style='left:171px;top:433.10px;font-size:14px;color:#262626;display:flex'><span class='g' style='width:8.8px'><span style='display:inline-block;transform:scaleX(1.12)'>7</span></span></div>
<div class='t' style='left:200px;width:201.4px;top:433.10px;font-size:14px;color:#262626;display:flex;justify-content:flex-end'><span class='g' style='width:8.8px'><span style='display:inline-block;transform:scaleX(1.12)'>7</span></span><span class='g' style='width:3.5px'><span style='display:inline-block;transform:scaleX(1.05)'>/</span></span><span class='g' style='width:5.25px'><span style='display:inline-block;transform:scaleX(1.0)'>1</span></span><span class='g' style='width:8.8px'><span style='display:inline-block;transform:scaleX(1.12)'>5</span></span><span class='g' style='width:3.5px'><span style='display:inline-block;transform:scaleX(1.05)'>/</span></span><span class='g' style='width:8.8px'><span style='display:inline-block;transform:scaleX(1.12)'>2</span></span><span class='g' style='width:8.8px'><span style='display:inline-block;transform:scaleX(1.12)'>0</span></span><span class='g' style='width:5.25px'><span style='display:inline-block;transform:scaleX(1.0)'>1</span></span><span class='g' style='width:8.8px'><span style='display:inline-block;transform:scaleX(1.12)'>9</span></span></div>
<div class='t' style='left:516px;width:100.6px;top:433.10px;font-size:14px;color:#262626;display:flex;justify-content:flex-end'><span class='g' style='width:8.8px'><span style='display:inline-block;transform:scaleX(1.12)'>6</span></span><span class='g' style='width:8.8px'><span style='display:inline-block;transform:scaleX(1.12)'>2</span></span></div>
<div class='t' style='left:607px;width:100.6px;top:433.10px;font-size:14px;color:#262626;display:flex;justify-content:flex-end'><span class='g' style='width:8.8px'><span style='display:inline-block;transform:scaleX(1.12)'>3</span></span><span class='g' style='width:8.8px'><span style='display:inline-block;transform:scaleX(1.12)'>0</span></span></div>
<div class='t' style='left:49.9px;top:455.28px;font-size:14px;color:#262626'><span style='display:inline-block;transform:scaleX(1.128);transform-origin:0 0'>Employee Name</span></div>
<div class='t' style='left:171px;top:455.28px;font-size:14px;color:#262626;display:flex'><span class='g' style='width:8.8px'><span style='display:inline-block;transform:scaleX(1.12)'>8</span></span></div>
<div class='t' style='left:200px;width:201.4px;top:455.28px;font-size:14px;color:#262626;display:flex;justify-content:flex-end'><span class='g' style='width:8.8px'><span style='display:inline-block;transform:scaleX(1.12)'>7</span></span><span class='g' style='width:3.5px'><span style='display:inline-block;transform:scaleX(1.05)'>/</span></span><span class='g' style='width:8.8px'><span style='display:inline-block;transform:scaleX(1.12)'>2</span></span><span class='g' style='width:8.8px'><span style='display:inline-block;transform:scaleX(1.12)'>0</span></span><span class='g' style='width:3.5px'><span style='display:inline-block;transform:scaleX(1.05)'>/</span></span><span class='g' style='width:8.8px'><span style='display:inline-block;transform:scaleX(1.12)'>2</span></span><span class='g' style='width:8.8px'><span style='display:inline-block;transform:scaleX(1.12)'>0</span></span><span class='g' style='width:5.25px'><span style='display:inline-block;transform:scaleX(1.0)'>1</span></span><span class='g' style='width:8.8px'><span style='display:inline-block;transform:scaleX(1.12)'>9</span></span></div>
<div class='t' style='left:516px;width:100.6px;top:455.28px;font-size:14px;color:#262626;display:flex;justify-content:flex-end'><span class='g' style='width:8.8px'><span style='display:inline-block;transform:scaleX(1.12)'>6</span></span><span class='g' style='width:8.8px'><span style='display:inline-block;transform:scaleX(1.12)'>2</span></span></div>
<div class='t' style='left:607px;width:100.6px;top:455.28px;font-size:14px;color:#262626;display:flex;justify-content:flex-end'><span class='g' style='width:8.8px'><span style='display:inline-block;transform:scaleX(1.12)'>2</span></span><span class='g' style='width:8.8px'><span style='display:inline-block;transform:scaleX(1.12)'>5</span></span></div>
<div class='t' style='left:49.9px;top:477.46px;font-size:14px;color:#262626'><span style='display:inline-block;transform:scaleX(1.128);transform-origin:0 0'>Employee Name</span></div>
<div class='t' style='left:171px;top:477.46px;font-size:14px;color:#262626;display:flex'><span class='g' style='width:8.8px'><span style='display:inline-block;transform:scaleX(1.12)'>9</span></span></div>
<div class='t' style='left:200px;width:201.4px;top:477.46px;font-size:14px;color:#262626;display:flex;justify-content:flex-end'><span class='g' style='width:8.8px'><span style='display:inline-block;transform:scaleX(1.12)'>8</span></span><span class='g' style='width:3.5px'><span style='display:inline-block;transform:scaleX(1.05)'>/</span></span><span class='g' style='width:5.25px'><span style='display:inline-block;transform:scaleX(1.0)'>1</span></span><span class='g' style='width:3.5px'><span style='display:inline-block;transform:scaleX(1.05)'>/</span></span><span class='g' style='width:8.8px'><span style='display:inline-block;transform:scaleX(1.12)'>2</span></span><span class='g' style='width:8.8px'><span style='display:inline-block;transform:scaleX(1.12)'>0</span></span><span class='g' style='width:5.25px'><span style='display:inline-block;transform:scaleX(1.0)'>1</span></span><span class='g' style='width:8.8px'><span style='display:inline-block;transform:scaleX(1.12)'>9</span></span></div>
<div class='t' style='left:516px;width:100.6px;top:477.46px;font-size:14px;color:#262626;display:flex;justify-content:flex-end'><span class='g' style='width:8.8px'><span style='display:inline-block;transform:scaleX(1.12)'>6</span></span><span class='g' style='width:8.8px'><span style='display:inline-block;transform:scaleX(1.12)'>2</span></span></div>
<div class='t' style='left:607px;width:100.6px;top:477.46px;font-size:14px;color:#262626;display:flex;justify-content:flex-end'><span class='g' style='width:8.8px'><span style='display:inline-block;transform:scaleX(1.12)'>4</span></span><span class='g' style='width:8.8px'><span style='display:inline-block;transform:scaleX(1.12)'>4</span></span></div>
<div class='t' style='left:49.9px;top:499.64px;font-size:14px;color:#262626'><span style='display:inline-block;transform:scaleX(1.128);transform-origin:0 0'>Employee Name</span></div>
<div class='t' style='left:171px;top:499.64px;font-size:14px;color:#262626;display:flex'><span class='g' style='width:5.25px'><span style='display:inline-block;transform:scaleX(1.0)'>1</span></span><span class='g' style='width:8.8px'><span style='display:inline-block;transform:scaleX(1.12)'>0</span></span></div>
<div class='t' style='left:200px;width:201.4px;top:499.64px;font-size:14px;color:#262626;display:flex;justify-content:flex-end'><span class='g' style='width:8.8px'><span style='display:inline-block;transform:scaleX(1.12)'>8</span></span><span class='g' style='width:3.5px'><span style='display:inline-block;transform:scaleX(1.05)'>/</span></span><span class='g' style='width:8.8px'><span style='display:inline-block;transform:scaleX(1.12)'>5</span></span><span class='g' style='width:3.5px'><span style='display:inline-block;transform:scaleX(1.05)'>/</span></span><span class='g' style='width:8.8px'><span style='display:inline-block;transform:scaleX(1.12)'>2</span></span><span class='g' style='width:8.8px'><span style='display:inline-block;transform:scaleX(1.12)'>0</span></span><span class='g' style='width:5.25px'><span style='display:inline-block;transform:scaleX(1.0)'>1</span></span><span class='g' style='width:8.8px'><span style='display:inline-block;transform:scaleX(1.12)'>9</span></span></div>
<div class='t' style='left:516px;width:100.6px;top:499.64px;font-size:14px;color:#262626;display:flex;justify-content:flex-end'><span class='g' style='width:8.8px'><span style='display:inline-block;transform:scaleX(1.12)'>6</span></span><span class='g' style='width:8.8px'><span style='display:inline-block;transform:scaleX(1.12)'>2</span></span></div>
<div class='t' style='left:607px;width:100.6px;top:499.64px;font-size:14px;color:#262626;display:flex;justify-content:flex-end'><span class='g' style='width:8.8px'><span style='display:inline-block;transform:scaleX(1.12)'>4</span></span><span class='g' style='width:8.8px'><span style='display:inline-block;transform:scaleX(1.12)'>5</span></span></div>
<div class='t' style='left:49.9px;top:521.82px;font-size:14px;color:#262626'><span style='display:inline-block;transform:scaleX(1.128);transform-origin:0 0'>Employee Name</span></div>
<div class='t' style='left:171px;top:521.82px;font-size:14px;color:#262626;display:flex'><span class='g' style='width:5.25px'><span style='display:inline-block;transform:scaleX(1.0)'>1</span></span><span class='g' style='width:5.25px'><span style='display:inline-block;transform:scaleX(1.0)'>1</span></span></div>
<div class='t' style='left:200px;width:201.4px;top:521.82px;font-size:14px;color:#262626;display:flex;justify-content:flex-end'><span class='g' style='width:8.8px'><span style='display:inline-block;transform:scaleX(1.12)'>8</span></span><span class='g' style='width:3.5px'><span style='display:inline-block;transform:scaleX(1.05)'>/</span></span><span class='g' style='width:8.8px'><span style='display:inline-block;transform:scaleX(1.12)'>2</span></span><span class='g' style='width:8.8px'><span style='display:inline-block;transform:scaleX(1.12)'>0</span></span><span class='g' style='width:3.5px'><span style='display:inline-block;transform:scaleX(1.05)'>/</span></span><span class='g' style='width:8.8px'><span style='display:inline-block;transform:scaleX(1.12)'>2</span></span><span class='g' style='width:8.8px'><span style='display:inline-block;transform:scaleX(1.12)'>0</span></span><span class='g' style='width:5.25px'><span style='display:inline-block;transform:scaleX(1.0)'>1</span></span><span class='g' style='width:8.8px'><span style='display:inline-block;transform:scaleX(1.12)'>9</span></span></div>
<div class='t' style='left:516px;width:100.6px;top:521.82px;font-size:14px;color:#262626;display:flex;justify-content:flex-end'><span class='g' style='width:8.8px'><span style='display:inline-block;transform:scaleX(1.12)'>6</span></span><span class='g' style='width:5.25px'><span style='display:inline-block;transform:scaleX(1.0)'>1</span></span></div>
<div class='t' style='left:607px;width:100.6px;top:521.82px;font-size:14px;color:#262626;display:flex;justify-content:flex-end'><span class='g' style='width:8.8px'><span style='display:inline-block;transform:scaleX(1.12)'>3</span></span><span class='g' style='width:8.8px'><span style='display:inline-block;transform:scaleX(1.12)'>0</span></span></div>
<div class='t' style='left:49.9px;top:544.00px;font-size:14px;color:#262626'><span style='display:inline-block;transform:scaleX(1.128);transform-origin:0 0'>Employee Name</span></div>
<div class='t' style='left:171px;top:544.00px;font-size:14px;color:#262626;display:flex'><span class='g' style='width:5.25px'><span style='display:inline-block;transform:scaleX(1.0)'>1</span></span><span class='g' style='width:8.8px'><span style='display:inline-block;transform:scaleX(1.12)'>2</span></span></div>
<div class='t' style='left:200px;width:201.4px;top:544.00px;font-size:14px;color:#262626;display:flex;justify-content:flex-end'><span class='g' style='width:8.8px'><span style='display:inline-block;transform:scaleX(1.12)'>9</span></span><span class='g' style='width:3.5px'><span style='display:inline-block;transform:scaleX(1.05)'>/</span></span><span class='g' style='width:5.25px'><span style='display:inline-block;transform:scaleX(1.0)'>1</span></span><span class='g' style='width:3.5px'><span style='display:inline-block;transform:scaleX(1.05)'>/</span></span><span class='g' style='width:8.8px'><span style='display:inline-block;transform:scaleX(1.12)'>2</span></span><span class='g' style='width:8.8px'><span style='display:inline-block;transform:scaleX(1.12)'>0</span></span><span class='g' style='width:5.25px'><span style='display:inline-block;transform:scaleX(1.0)'>1</span></span><span class='g' style='width:8.8px'><span style='display:inline-block;transform:scaleX(1.12)'>9</span></span></div>
<div class='t' style='left:516px;width:100.6px;top:544.00px;font-size:14px;color:#262626;display:flex;justify-content:flex-end'><span class='g' style='width:8.8px'><span style='display:inline-block;transform:scaleX(1.12)'>6</span></span><span class='g' style='width:5.25px'><span style='display:inline-block;transform:scaleX(1.0)'>1</span></span></div>
<div class='t' style='left:607px;width:100.6px;top:544.00px;font-size:14px;color:#262626;display:flex;justify-content:flex-end'><span class='g' style='width:8.8px'><span style='display:inline-block;transform:scaleX(1.12)'>3</span></span><span class='g' style='width:8.8px'><span style='display:inline-block;transform:scaleX(1.12)'>9</span></span></div>
<div class='t' style='left:49.9px;top:566.18px;font-size:14px;color:#262626'><span style='display:inline-block;transform:scaleX(1.128);transform-origin:0 0'>Employee Name</span></div>
<div class='t' style='left:171px;top:566.18px;font-size:14px;color:#262626;display:flex'><span class='g' style='width:5.25px'><span style='display:inline-block;transform:scaleX(1.0)'>1</span></span><span class='g' style='width:8.8px'><span style='display:inline-block;transform:scaleX(1.12)'>3</span></span></div>
<div class='t' style='left:200px;width:201.4px;top:566.18px;font-size:14px;color:#262626;display:flex;justify-content:flex-end'><span class='g' style='width:5.25px'><span style='display:inline-block;transform:scaleX(1.0)'>1</span></span><span class='g' style='width:8.8px'><span style='display:inline-block;transform:scaleX(1.12)'>0</span></span><span class='g' style='width:3.5px'><span style='display:inline-block;transform:scaleX(1.05)'>/</span></span><span class='g' style='width:8.8px'><span style='display:inline-block;transform:scaleX(1.12)'>2</span></span><span class='g' style='width:3.5px'><span style='display:inline-block;transform:scaleX(1.05)'>/</span></span><span class='g' style='width:8.8px'><span style='display:inline-block;transform:scaleX(1.12)'>2</span></span><span class='g' style='width:8.8px'><span style='display:inline-block;transform:scaleX(1.12)'>0</span></span><span class='g' style='width:8.8px'><span style='display:inline-block;transform:scaleX(1.12)'>2</span></span><span class='g' style='width:8.8px'><span style='display:inline-block;transform:scaleX(1.12)'>0</span></span></div>
<div class='t' style='left:516px;width:100.6px;top:566.18px;font-size:14px;color:#262626;display:flex;justify-content:flex-end'><span class='g' style='width:8.8px'><span style='display:inline-block;transform:scaleX(1.12)'>4</span></span><span class='g' style='width:8.8px'><span style='display:inline-block;transform:scaleX(1.12)'>8</span></span></div>
<div class='t' style='left:607px;width:100.6px;top:566.18px;font-size:14px;color:#262626;display:flex;justify-content:flex-end'><span class='g' style='width:8.8px'><span style='display:inline-block;transform:scaleX(1.12)'>4</span></span><span class='g' style='width:8.8px'><span style='display:inline-block;transform:scaleX(1.12)'>8</span></span></div>
<div class='t' style='left:49.9px;top:588.36px;font-size:14px;color:#262626'><span style='display:inline-block;transform:scaleX(1.128);transform-origin:0 0'>Employee Name</span></div>
<div class='t' style='left:171px;top:588.36px;font-size:14px;color:#262626;display:flex'><span class='g' style='width:5.25px'><span style='display:inline-block;transform:scaleX(1.0)'>1</span></span><span class='g' style='width:8.8px'><span style='display:inline-block;transform:scaleX(1.12)'>4</span></span></div>
<div class='t' style='left:200px;width:201.4px;top:588.36px;font-size:14px;color:#262626;display:flex;justify-content:flex-end'><span class='g' style='width:5.25px'><span style='display:inline-block;transform:scaleX(1.0)'>1</span></span><span class='g' style='width:8.8px'><span style='display:inline-block;transform:scaleX(1.12)'>0</span></span><span class='g' style='width:3.5px'><span style='display:inline-block;transform:scaleX(1.05)'>/</span></span><span class='g' style='width:8.8px'><span style='display:inline-block;transform:scaleX(1.12)'>3</span></span><span class='g' style='width:8.8px'><span style='display:inline-block;transform:scaleX(1.12)'>0</span></span><span class='g' style='width:3.5px'><span style='display:inline-block;transform:scaleX(1.05)'>/</span></span><span class='g' style='width:8.8px'><span style='display:inline-block;transform:scaleX(1.12)'>2</span></span><span class='g' style='width:8.8px'><span style='display:inline-block;transform:scaleX(1.12)'>0</span></span><span class='g' style='width:8.8px'><span style='display:inline-block;transform:scaleX(1.12)'>2</span></span><span class='g' style='width:8.8px'><span style='display:inline-block;transform:scaleX(1.12)'>0</span></span></div>
<div class='t' style='left:516px;width:100.6px;top:588.36px;font-size:14px;color:#262626;display:flex;justify-content:flex-end'><span class='g' style='width:8.8px'><span style='display:inline-block;transform:scaleX(1.12)'>4</span></span><span class='g' style='width:8.8px'><span style='display:inline-block;transform:scaleX(1.12)'>7</span></span></div>
<div class='t' style='left:607px;width:100.6px;top:588.36px;font-size:14px;color:#262626;display:flex;justify-content:flex-end'><span class='g' style='width:8.8px'><span style='display:inline-block;transform:scaleX(1.12)'>2</span></span><span class='g' style='width:8.8px'><span style='display:inline-block;transform:scaleX(1.12)'>6</span></span></div>
<div class='t' style='left:49.9px;top:610.54px;font-size:14px;color:#262626'><span style='display:inline-block;transform:scaleX(1.128);transform-origin:0 0'>Employee Name</span></div>
<div class='t' style='left:171px;top:610.54px;font-size:14px;color:#262626;display:flex'><span class='g' style='width:5.25px'><span style='display:inline-block;transform:scaleX(1.0)'>1</span></span><span class='g' style='width:8.8px'><span style='display:inline-block;transform:scaleX(1.12)'>5</span></span></div>
<div class='t' style='left:200px;width:201.4px;top:610.54px;font-size:14px;color:#262626;display:flex;justify-content:flex-end'><span class='g' style='width:5.25px'><span style='display:inline-block;transform:scaleX(1.0)'>1</span></span><span class='g' style='width:5.25px'><span style='display:inline-block;transform:scaleX(1.0)'>1</span></span><span class='g' style='width:3.5px'><span style='display:inline-block;transform:scaleX(1.05)'>/</span></span><span class='g' style='width:5.25px'><span style='display:inline-block;transform:scaleX(1.0)'>1</span></span><span class='g' style='width:8.8px'><span style='display:inline-block;transform:scaleX(1.12)'>5</span></span><span class='g' style='width:3.5px'><span style='display:inline-block;transform:scaleX(1.05)'>/</span></span><span class='g' style='width:8.8px'><span style='display:inline-block;transform:scaleX(1.12)'>2</span></span><span class='g' style='width:8.8px'><span style='display:inline-block;transform:scaleX(1.12)'>0</span></span><span class='g' style='width:8.8px'><span style='display:inline-block;transform:scaleX(1.12)'>2</span></span><span class='g' style='width:8.8px'><span style='display:inline-block;transform:scaleX(1.12)'>0</span></span></div>
<div class='t' style='left:516px;width:100.6px;top:610.54px;font-size:14px;color:#262626;display:flex;justify-content:flex-end'><span class='g' style='width:8.8px'><span style='display:inline-block;transform:scaleX(1.12)'>4</span></span><span class='g' style='width:8.8px'><span style='display:inline-block;transform:scaleX(1.12)'>6</span></span></div>
<div class='t' style='left:607px;width:100.6px;top:610.54px;font-size:14px;color:#262626;display:flex;justify-content:flex-end'><span class='g' style='width:8.8px'><span style='display:inline-block;transform:scaleX(1.12)'>3</span></span><span class='g' style='width:8.8px'><span style='display:inline-block;transform:scaleX(1.12)'>5</span></span></div>
<div class='t' style='left:49.9px;top:632.72px;font-size:14px;color:#262626'><span style='display:inline-block;transform:scaleX(1.128);transform-origin:0 0'>Employee Name</span></div>
<div class='t' style='left:171px;top:632.72px;font-size:14px;color:#262626;display:flex'><span class='g' style='width:5.25px'><span style='display:inline-block;transform:scaleX(1.0)'>1</span></span><span class='g' style='width:8.8px'><span style='display:inline-block;transform:scaleX(1.12)'>6</span></span></div>
<div class='t' style='left:200px;width:201.4px;top:632.72px;font-size:14px;color:#262626;display:flex;justify-content:flex-end'><span class='g' style='width:5.25px'><span style='display:inline-block;transform:scaleX(1.0)'>1</span></span><span class='g' style='width:3.5px'><span style='display:inline-block;transform:scaleX(1.05)'>/</span></span><span class='g' style='width:8.8px'><span style='display:inline-block;transform:scaleX(1.12)'>2</span></span><span class='g' style='width:8.8px'><span style='display:inline-block;transform:scaleX(1.12)'>0</span></span><span class='g' style='width:3.5px'><span style='display:inline-block;transform:scaleX(1.05)'>/</span></span><span class='g' style='width:8.8px'><span style='display:inline-block;transform:scaleX(1.12)'>2</span></span><span class='g' style='width:8.8px'><span style='display:inline-block;transform:scaleX(1.12)'>0</span></span><span class='g' style='width:8.8px'><span style='display:inline-block;transform:scaleX(1.12)'>2</span></span><span class='g' style='width:5.25px'><span style='display:inline-block;transform:scaleX(1.0)'>1</span></span></div>
<div class='t' style='left:516px;width:100.6px;top:632.72px;font-size:14px;color:#262626;display:flex;justify-content:flex-end'><span class='g' style='width:8.8px'><span style='display:inline-block;transform:scaleX(1.12)'>4</span></span><span class='g' style='width:8.8px'><span style='display:inline-block;transform:scaleX(1.12)'>4</span></span></div>
<div class='t' style='left:607px;width:100.6px;top:632.72px;font-size:14px;color:#262626;display:flex;justify-content:flex-end'><span class='g' style='width:8.8px'><span style='display:inline-block;transform:scaleX(1.12)'>3</span></span><span class='g' style='width:8.8px'><span style='display:inline-block;transform:scaleX(1.12)'>3</span></span></div>
<div class='t' style='left:49.9px;top:654.90px;font-size:14px;color:#262626'><span style='display:inline-block;transform:scaleX(1.128);transform-origin:0 0'>Employee Name</span></div>
<div class='t' style='left:171px;top:654.90px;font-size:14px;color:#262626;display:flex'><span class='g' style='width:5.25px'><span style='display:inline-block;transform:scaleX(1.0)'>1</span></span><span class='g' style='width:8.8px'><span style='display:inline-block;transform:scaleX(1.12)'>7</span></span></div>
<div class='t' style='left:200px;width:201.4px;top:654.90px;font-size:14px;color:#262626;display:flex;justify-content:flex-end'><span class='g' style='width:8.8px'><span style='display:inline-block;transform:scaleX(1.12)'>2</span></span><span class='g' style='width:3.5px'><span style='display:inline-block;transform:scaleX(1.05)'>/</span></span><span class='g' style='width:5.25px'><span style='display:inline-block;transform:scaleX(1.0)'>1</span></span><span class='g' style='width:8.8px'><span style='display:inline-block;transform:scaleX(1.12)'>5</span></span><span class='g' style='width:3.5px'><span style='display:inline-block;transform:scaleX(1.05)'>/</span></span><span class='g' style='width:8.8px'><span style='display:inline-block;transform:scaleX(1.12)'>2</span></span><span class='g' style='width:8.8px'><span style='display:inline-block;transform:scaleX(1.12)'>0</span></span><span class='g' style='width:8.8px'><span style='display:inline-block;transform:scaleX(1.12)'>2</span></span><span class='g' style='width:5.25px'><span style='display:inline-block;transform:scaleX(1.0)'>1</span></span></div>
<div class='t' style='left:516px;width:100.6px;top:654.90px;font-size:14px;color:#262626;display:flex;justify-content:flex-end'><span class='g' style='width:8.8px'><span style='display:inline-block;transform:scaleX(1.12)'>4</span></span><span class='g' style='width:8.8px'><span style='display:inline-block;transform:scaleX(1.12)'>3</span></span></div>
<div class='t' style='left:607px;width:100.6px;top:654.90px;font-size:14px;color:#262626;display:flex;justify-content:flex-end'><span class='g' style='width:8.8px'><span style='display:inline-block;transform:scaleX(1.12)'>2</span></span><span class='g' style='width:8.8px'><span style='display:inline-block;transform:scaleX(1.12)'>8</span></span></div>
<div class='t' style='left:49.9px;top:677.08px;font-size:14px;color:#262626'><span style='display:inline-block;transform:scaleX(1.128);transform-origin:0 0'>Employee Name</span></div>
<div class='t' style='left:171px;top:677.08px;font-size:14px;color:#262626;display:flex'><span class='g' style='width:5.25px'><span style='display:inline-block;transform:scaleX(1.0)'>1</span></span><span class='g' style='width:8.8px'><span style='display:inline-block;transform:scaleX(1.12)'>8</span></span></div>
<div class='t' style='left:200px;width:201.4px;top:677.08px;font-size:14px;color:#262626;display:flex;justify-content:flex-end'><span class='g' style='width:8.8px'><span style='display:inline-block;transform:scaleX(1.12)'>3</span></span><span class='g' style='width:3.5px'><span style='display:inline-block;transform:scaleX(1.05)'>/</span></span><span class='g' style='width:5.25px'><span style='display:inline-block;transform:scaleX(1.0)'>1</span></span><span class='g' style='width:3.5px'><span style='display:inline-block;transform:scaleX(1.05)'>/</span></span><span class='g' style='width:8.8px'><span style='display:inline-block;transform:scaleX(1.12)'>2</span></span><span class='g' style='width:8.8px'><span style='display:inline-block;transform:scaleX(1.12)'>0</span></span><span class='g' style='width:8.8px'><span style='display:inline-block;transform:scaleX(1.12)'>2</span></span><span class='g' style='width:5.25px'><span style='display:inline-block;transform:scaleX(1.0)'>1</span></span></div>
<div class='t' style='left:516px;width:100.6px;top:677.08px;font-size:14px;color:#262626;display:flex;justify-content:flex-end'><span class='g' style='width:8.8px'><span style='display:inline-block;transform:scaleX(1.12)'>4</span></span><span class='g' style='width:8.8px'><span style='display:inline-block;transform:scaleX(1.12)'>3</span></span></div>
<div class='t' style='left:607px;width:100.6px;top:677.08px;font-size:14px;color:#262626;display:flex;justify-content:flex-end'><span class='g' style='width:8.8px'><span style='display:inline-block;transform:scaleX(1.12)'>3</span></span><span class='g' style='width:8.8px'><span style='display:inline-block;transform:scaleX(1.12)'>9</span></span></div>
<div class='t' style='left:49.9px;top:699.26px;font-size:14px;color:#262626'><span style='display:inline-block;transform:scaleX(1.128);transform-origin:0 0'>Employee Name</span></div>
<div class='t' style='left:171px;top:699.26px;font-size:14px;color:#262626;display:flex'><span class='g' style='width:5.25px'><span style='display:inline-block;transform:scaleX(1.0)'>1</span></span><span class='g' style='width:8.8px'><span style='display:inline-block;transform:scaleX(1.12)'>9</span></span></div>
<div class='t' style='left:200px;width:201.4px;top:699.26px;font-size:14px;color:#262626;display:flex;justify-content:flex-end'><span class='g' style='width:8.8px'><span style='display:inline-block;transform:scaleX(1.12)'>4</span></span><span class='g' style='width:3.5px'><span style='display:inline-block;transform:scaleX(1.05)'>/</span></span><span class='g' style='width:8.8px'><span style='display:inline-block;transform:scaleX(1.12)'>2</span></span><span class='g' style='width:8.8px'><span style='display:inline-block;transform:scaleX(1.12)'>5</span></span><span class='g' style='width:3.5px'><span style='display:inline-block;transform:scaleX(1.05)'>/</span></span><span class='g' style='width:8.8px'><span style='display:inline-block;transform:scaleX(1.12)'>2</span></span><span class='g' style='width:8.8px'><span style='display:inline-block;transform:scaleX(1.12)'>0</span></span><span class='g' style='width:8.8px'><span style='display:inline-block;transform:scaleX(1.12)'>2</span></span><span class='g' style='width:5.25px'><span style='display:inline-block;transform:scaleX(1.0)'>1</span></span></div>
<div class='t' style='left:516px;width:100.6px;top:699.26px;font-size:14px;color:#262626;display:flex;justify-content:flex-end'><span class='g' style='width:8.8px'><span style='display:inline-block;transform:scaleX(1.12)'>4</span></span><span class='g' style='width:5.25px'><span style='display:inline-block;transform:scaleX(1.0)'>1</span></span></div>
<div class='t' style='left:607px;width:100.6px;top:699.26px;font-size:14px;color:#262626;display:flex;justify-content:flex-end'><span class='g' style='width:8.8px'><span style='display:inline-block;transform:scaleX(1.12)'>4</span></span><span class='g' style='width:8.8px'><span style='display:inline-block;transform:scaleX(1.12)'>0</span></span></div>
<div class='t' style='left:49.9px;top:721.44px;font-size:14px;color:#262626'><span style='display:inline-block;transform:scaleX(1.128);transform-origin:0 0'>Employee Name</span></div>
<div class='t' style='left:171px;top:721.44px;font-size:14px;color:#262626;display:flex'><span class='g' style='width:8.8px'><span style='display:inline-block;transform:scaleX(1.12)'>2</span></span><span class='g' style='width:8.8px'><span style='display:inline-block;transform:scaleX(1.12)'>0</span></span></div>
<div class='t' style='left:200px;width:201.4px;top:721.44px;font-size:14px;color:#262626;display:flex;justify-content:flex-end'><span class='g' style='width:8.8px'><span style='display:inline-block;transform:scaleX(1.12)'>5</span></span><span class='g' style='width:3.5px'><span style='display:inline-block;transform:scaleX(1.05)'>/</span></span><span class='g' style='width:8.8px'><span style='display:inline-block;transform:scaleX(1.12)'>5</span></span><span class='g' style='width:3.5px'><span style='display:inline-block;transform:scaleX(1.05)'>/</span></span><span class='g' style='width:8.8px'><span style='display:inline-block;transform:scaleX(1.12)'>2</span></span><span class='g' style='width:8.8px'><span style='display:inline-block;transform:scaleX(1.12)'>0</span></span><span class='g' style='width:8.8px'><span style='display:inline-block;transform:scaleX(1.12)'>2</span></span><span class='g' style='width:5.25px'><span style='display:inline-block;transform:scaleX(1.0)'>1</span></span></div>
<div class='t' style='left:516px;width:100.6px;top:721.44px;font-size:14px;color:#262626;display:flex;justify-content:flex-end'><span class='g' style='width:8.8px'><span style='display:inline-block;transform:scaleX(1.12)'>4</span></span><span class='g' style='width:5.25px'><span style='display:inline-block;transform:scaleX(1.0)'>1</span></span></div>
<div class='t' style='left:607px;width:100.6px;top:721.44px;font-size:14px;color:#262626;display:flex;justify-content:flex-end'><span class='g' style='width:8.8px'><span style='display:inline-block;transform:scaleX(1.12)'>2</span></span><span class='g' style='width:8.8px'><span style='display:inline-block;transform:scaleX(1.12)'>0</span></span></div>
<div class='t' style='left:516px;width:100.6px;top:300.02px;font-size:14px;color:#262626;display:flex;justify-content:flex-end'><span class='g' style='width:8.8px'><span style='display:inline-block;transform:scaleX(1.12)'>6</span></span><span class='g' style='width:8.8px'><span style='display:inline-block;transform:scaleX(1.12)'>9</span></span></div>
<svg class='abs' style='left:0;top:0' width='1600' height='868' viewBox='0 0 1600 868'><rect x='621' y='295.5' width='90' height='21.5' fill='#efeaf3'/><rect x='526.4' y='296.3' width='93.2' height='19.9' fill='none' stroke='#fb9c00' stroke-width='2' stroke-dasharray='4 2'/><rect x='622' y='296.3' width='88.2' height='19.9' fill='none' stroke='#8f3fb0' stroke-width='2' stroke-dasharray='4 2'/></svg>
<div class='t' style='left:607px;width:100.6px;top:300.02px;font-size:14px;color:#262626;display:flex;justify-content:flex-end'><span class='g' style='width:8.8px'><span style='display:inline-block;transform:scaleX(1.12)'>2</span></span><span class='g' style='width:8.8px'><span style='display:inline-block;transform:scaleX(1.12)'>0</span></span></div>
<div class='abs' style='left:708.8px;top:293.3px;width:104px;height:25px;background:#fff;border:2px solid #a8c7fa'></div>
<div class='abs' style='left:711.3px;top:294.8px;width:99.6px;height:22px;border:2px solid #0b57d0'></div>
<div class='t' style='left:715.3px;top:300.3px;font-size:12.6px;color:#444746'>=<span style='color:#f28b00'>D5</span><span style='color:#5f6368;margin:0 1.6px 0 1.3px'>-</span><span style='color:#8f3fb0'>E5</span></div>
<div class='abs' style='left:760px;top:299.2px;width:1.1px;height:15.6px;background:#8f3fb0'></div>
<div class='abs' style='left:711px;top:266px;width:41px;height:25.6px;background:#fff;box-shadow:0 1px 1.5px rgba(60,64,67,.35)'></div>
<svg class='abs' style='left:0;top:0' width='1600' height='868' viewBox='0 0 1600 868'><path d='M711.6 291 L718.1 298.4 L725 291Z' fill='#fff'/><path d='M712.2 291.8 L718.1 298.6 L724.4 291.8' fill='none' stroke='rgba(60,64,67,.18)' stroke-width='0.8'/></svg>
<div class='t' style='left:718.5px;top:272.5px;font-size:12px;color:#1a73e8'>49</div>
<svg class='abs' style='left:0;top:0' width='1600' height='868' viewBox='0 0 1600 868'><path d='M737.6 276.4 L743.2 282 M743.2 276.4 L737.6 282' stroke='#b7b7b7' stroke-width='1.2'/></svg>
<div class='abs' style='left:470.5px;top:259.5px;width:358.5px;height:62px;border:5.2px solid #ff2600'></div>
<div class='abs' style='left:1587px;top:147px;width:13px;height:685px;background:#fff;border-left:1px solid #e1e1e1'></div>
<div class='abs' style='left:1587px;top:147px;width:13px;height:25.5px;background:#f8f9fa;border-left:1px solid #d9d9d9;border-bottom:1px solid #d9d9d9'></div>
<div class='abs' style='left:1589.5px;top:174.5px;width:9.5px;height:27px;border-radius:5px;background:#dadce0'></div>
<div class='abs' style='left:1587px;top:784px;width:13px;height:34px;background:#f8f9fa;border-left:1px solid #e1e1e1;border-top:1px solid #e1e1e1'></div>
<div class='abs' style='left:1588px;top:800px;width:8px;height:1px;background:#b9cdf0'></div>
<div class='abs' style='left:0;top:817.5px;width:1600px;height:14px;background:#fff;border-top:1px solid #d9d9d9'></div>
<div class='abs' style='left:0;top:818px;width:45.5px;height:13.5px;background:#f8f9fa;border-right:1px solid #d9d9d9'></div>
<div class='abs' style='left:1555.3px;top:818px;width:32px;height:13.5px;background:#f8f9fa;border-left:1px solid #e1e1e1'></div>
<div class='abs' style='left:1571.5px;top:818px;width:1px;height:13.5px;background:#e1e1e1'></div>
<div class='abs' style='left:1587px;top:818px;width:13px;height:13.5px;background:#f8f9fa;border-left:1px solid #e1e1e1'></div>
<div class='abs' style='left:0;top:831.5px;width:1600px;height:36.5px;background:#f9fbfd;border-top:1px solid #dfe3e8'></div>
<div class='abs' style='left:138.8px;top:832px;width:96px;height:36px;background:#e1e7f1'></div>
<svg class='abs' style='left:0;top:0' width='1600' height='868' viewBox='0 0 1600 868'><path d='M1591.2 793.2 L1594.05 789.8 L1596.9 793.2Z' fill='#8a8a8a'/><path d='M1591.2 807.9 L1594.05 811.2 L1596.9 807.9Z' fill='#8a8a8a'/><path d='M1564.3 821.6 L1560.8 824.25 L1564.3 826.9Z' fill='#8a8a8a'/><path d='M1579.1 821.6 L1582.5 824.25 L1579.1 826.9Z' fill='#8a8a8a'/><path d='M62.7 846 V857 M57.2 851.5 H68.2' stroke='#444746' stroke-width='1.6'/><path d='M97.5 847.2 H112.5 M97.5 851.5 H112.5 M97.5 855.8 H112.5' stroke='#444746' stroke-width='1.5'/><path d='M213.7 849.8 H222 L217.85 854.8Z' fill='#0b57d0'/><path d='M1572.9 848.3 L1567.5 853.4 L1572.9 858.4' fill='none' stroke='#444746' stroke-width='1.6'/></svg>
<div class='t' style='left:151.5px;top:844.8px;font-size:14px;font-weight:700;color:#0b57d0;letter-spacing:0.6px'>Sheet1</div>
<svg class='abs' style='left:1590px;top:852px' width='10' height='16' viewBox='0 0 10 16'><path d='M10 6.5 V16 H5.5 Q9 12 10 6.5Z' fill='#000'/></svg>
<div class='abs' style='left:1587px;top:146.6px;width:13px;height:1px;background:#c4c4c4'></div>
</body></html>
